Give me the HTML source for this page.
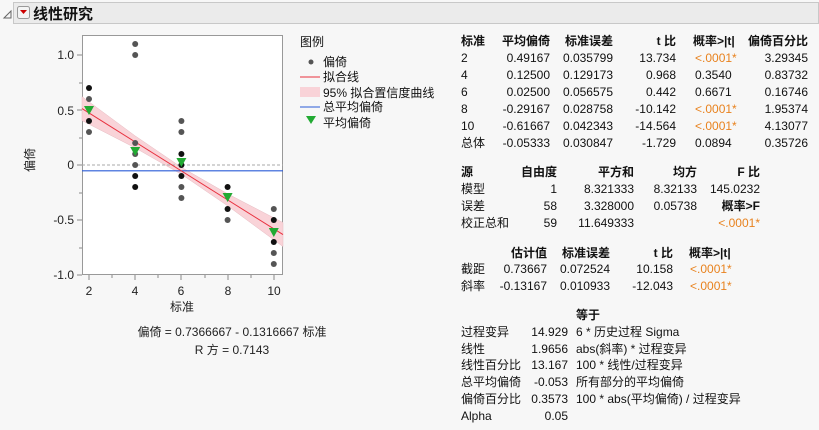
<!DOCTYPE html>
<html><head><meta charset="utf-8"><style>
body{margin:0;background:#f7f7f7;}
svg{display:block;font-family:"Liberation Sans","Noto Sans CJK SC",sans-serif;font-size:12px;}
.b{font-weight:bold}
.o{fill:#e8821e}
</style></head><body>
<svg width="819" height="430" viewBox="0 0 819 430">
<rect width="819" height="430" fill="#f7f7f7"/>
<path d="M4 18 L11 11 L11 18 Z" fill="none" stroke="#666" stroke-width="1"/>
<rect x="13.5" y="2.5" width="805" height="21" fill="#ebebeb" stroke="#c8c8c8"/>
<rect x="17.5" y="6.5" width="12" height="12" rx="2" fill="#f4f4f4" stroke="#999"/>
<path d="M20 10 L27 10 L23.5 14 Z" fill="#c00"/>
<text x="33" y="19" font-size="15" class="b" fill="#111">线性研究</text>
<rect x="82.5" y="35.5" width="200" height="239" fill="#fff" stroke="#999"/>
<polygon points="82,96.6 135.2,135.9 181.4,167.3 227.6,193.8 283,222.6 283,246.6 227.6,205.8 181.4,174.3 135.2,147.9 82,120.6" fill="#f9d3d8" stroke="#e6bcc2" stroke-width="0.5"/>
<line x1="82" y1="165" x2="283" y2="165" stroke="#aaa" stroke-dasharray="3,2"/>
<line x1="82" y1="170.8" x2="283" y2="170.8" stroke="#2a5bd7" stroke-width="1.2"/>
<line x1="82" y1="108.6" x2="283" y2="234.6" stroke="#e8303e" stroke-width="1"/>
<g fill="#555">
<circle cx="89" cy="99" r="3"/><circle cx="89" cy="132" r="3"/>
<circle cx="135.2" cy="44" r="3"/><circle cx="135.2" cy="55" r="3"/><circle cx="135.2" cy="143" r="3"/><circle cx="135.2" cy="154" r="3"/><circle cx="135.2" cy="165" r="3"/>
<circle cx="181.4" cy="121" r="3"/><circle cx="181.4" cy="132" r="3"/><circle cx="181.4" cy="187" r="3"/><circle cx="181.4" cy="198" r="3"/>
<circle cx="227.6" cy="220" r="3"/>
<circle cx="273.8" cy="209" r="3"/><circle cx="273.8" cy="253" r="3"/><circle cx="273.8" cy="264" r="3"/>
</g>
<g fill="#111">
<circle cx="89" cy="88" r="3"/><circle cx="89" cy="121" r="3"/>
<circle cx="135.2" cy="176" r="3"/><circle cx="135.2" cy="187" r="3"/>
<circle cx="181.4" cy="154" r="3"/><circle cx="181.4" cy="165" r="3"/><circle cx="181.4" cy="176" r="3"/>
<circle cx="227.6" cy="187" r="3"/><circle cx="227.6" cy="209" r="3"/>
<circle cx="273.8" cy="220" r="3"/><circle cx="273.8" cy="242" r="3"/>
</g>
<g fill="#22aa33">
<path d="M84 106 L94 106 L89 115 Z"/><path d="M130.2 147 L140.2 147 L135.2 156 Z"/><path d="M176.4 158 L186.4 158 L181.4 167 Z"/><path d="M222.6 193 L232.6 193 L227.6 202 Z"/><path d="M268.8 228 L278.8 228 L273.8 237 Z"/>
</g>
<g stroke="#888"><line x1="77" y1="55" x2="82" y2="55"/><line x1="79" y1="83" x2="82" y2="83"/><line x1="77" y1="110" x2="82" y2="110"/><line x1="79" y1="138" x2="82" y2="138"/><line x1="77" y1="165" x2="82" y2="165"/><line x1="79" y1="193" x2="82" y2="193"/><line x1="77" y1="220" x2="82" y2="220"/><line x1="79" y1="248" x2="82" y2="248"/><line x1="77" y1="275" x2="82" y2="275"/>
<line x1="89" y1="275" x2="89" y2="280"/><line x1="112" y1="275" x2="112" y2="278"/><line x1="135" y1="275" x2="135" y2="280"/><line x1="158" y1="275" x2="158" y2="278"/><line x1="181" y1="275" x2="181" y2="280"/><line x1="205" y1="275" x2="205" y2="278"/><line x1="228" y1="275" x2="228" y2="280"/><line x1="251" y1="275" x2="251" y2="278"/><line x1="274" y1="275" x2="274" y2="280"/></g>
<g text-anchor="end" fill="#222"><text x="74" y="59">1.0</text><text x="74" y="115">0.5</text><text x="74" y="169">0</text><text x="74" y="224">-0.5</text><text x="74" y="279">-1.0</text></g>
<g text-anchor="middle" fill="#222"><text x="89" y="295">2</text><text x="135" y="295">4</text><text x="181" y="295">6</text><text x="228" y="295">8</text><text x="274" y="295">10</text>
<text x="182" y="311">标准</text>
<text x="232" y="336">偏倚 = 0.7366667 - 0.1316667 标准</text>
<text x="232" y="354">R 方 = 0.7143</text></g>
<text transform="translate(34,160) rotate(-90)" text-anchor="middle" fill="#222">偏倚</text>
<g fill="#111">
<text x="300" y="46">图例</text>
<circle cx="311" cy="62" r="2.5" fill="#555"/><text x="323" y="66">偏倚</text>
<line x1="300" y1="77" x2="320" y2="77" stroke="#e8303e"/><text x="323" y="81">拟合线</text>
<rect x="300" y="87" width="20" height="10" fill="#f9d3d8"/><text x="323" y="97">95% 拟合置信度曲线</text>
<line x1="300" y1="107" x2="320" y2="107" stroke="#2a5bd7"/><text x="323" y="111">总平均偏倚</text>
<path d="M306 116 L316 116 L311 124 Z" fill="#22aa33"/><text x="323" y="127">平均偏倚</text>
</g>
<g fill="#111">
<g class="b"><text x="461" y="45">标准</text><text x="550" y="45" text-anchor="end">平均偏倚</text><text x="613" y="45" text-anchor="end">标准误差</text><text x="676" y="45" text-anchor="end">t 比</text><text x="693" y="45">概率&gt;|t|</text><text x="808" y="45" text-anchor="end">偏倚百分比</text></g>
<text x="461" y="62">2</text><text x="461" y="79">4</text><text x="461" y="96">6</text><text x="461" y="113">8</text><text x="461" y="130">10</text><text x="461" y="147">总体</text>
<g text-anchor="end">
<text x="550" y="62">0.49167</text><text x="550" y="79">0.12500</text><text x="550" y="96">0.02500</text><text x="550" y="113">-0.29167</text><text x="550" y="130">-0.61667</text><text x="550" y="147">-0.05333</text>
<text x="613" y="62">0.035799</text><text x="613" y="79">0.129173</text><text x="613" y="96">0.056575</text><text x="613" y="113">0.028758</text><text x="613" y="130">0.042343</text><text x="613" y="147">0.030847</text>
<text x="676" y="62">13.734</text><text x="676" y="79">0.968</text><text x="676" y="96">0.442</text><text x="676" y="113">-10.142</text><text x="676" y="130">-14.564</text><text x="676" y="147">-1.729</text>
<text x="808" y="62">3.29345</text><text x="808" y="79">0.83732</text><text x="808" y="96">0.16746</text><text x="808" y="113">1.95374</text><text x="808" y="130">4.13077</text><text x="808" y="147">0.35726</text>
</g>
<text x="695" y="62" class="o">&lt;.0001*</text><text x="695" y="79">0.3540</text><text x="695" y="96">0.6671</text><text x="695" y="113" class="o">&lt;.0001*</text><text x="695" y="130" class="o">&lt;.0001*</text><text x="695" y="147">0.0894</text>
</g>
<g fill="#111">
<g class="b"><text x="461" y="176">源</text><g text-anchor="end"><text x="557" y="176">自由度</text><text x="634" y="176">平方和</text><text x="697" y="176">均方</text><text x="760" y="176">F 比</text></g></g>
<text x="461" y="193">模型</text><text x="461" y="210">误差</text><text x="461" y="227">校正总和</text>
<g text-anchor="end">
<text x="557" y="193">1</text><text x="557" y="210">58</text><text x="557" y="227">59</text>
<text x="634" y="193">8.321333</text><text x="634" y="210">3.328000</text><text x="634" y="227">11.649333</text>
<text x="697" y="193">8.32133</text><text x="697" y="210">0.05738</text>
<text x="760" y="193">145.0232</text><text x="760" y="210" class="b">概率&gt;F</text><text x="760" y="227" class="o">&lt;.0001*</text>
</g></g>
<g fill="#111">
<g class="b" text-anchor="end"><text x="547" y="257">估计值</text><text x="610" y="257">标准误差</text><text x="673" y="257">t 比</text></g><text x="689" y="257" class="b">概率&gt;|t|</text>
<text x="461" y="273">截距</text><text x="461" y="290">斜率</text>
<g text-anchor="end"><text x="547" y="273">0.73667</text><text x="547" y="290">-0.13167</text><text x="610" y="273">0.072524</text><text x="610" y="290">0.010933</text><text x="673" y="273">10.158</text><text x="673" y="290">-12.043</text></g>
<text x="690" y="273" class="o">&lt;.0001*</text><text x="690" y="290" class="o">&lt;.0001*</text>
</g>
<g fill="#111">
<text x="576" y="319" class="b">等于</text>
<text x="461" y="336">过程变异</text><text x="461" y="353">线性</text><text x="461" y="369">线性百分比</text><text x="461" y="386">总平均偏倚</text><text x="461" y="403">偏倚百分比</text><text x="461" y="420">Alpha</text>
<g text-anchor="end"><text x="568" y="336">14.929</text><text x="568" y="353">1.9656</text><text x="568" y="369">13.167</text><text x="568" y="386">-0.053</text><text x="568" y="403">0.3573</text><text x="568" y="420">0.05</text></g>
<text x="576" y="336">6 * 历史过程 Sigma</text><text x="576" y="353">abs(斜率) * 过程变异</text><text x="576" y="369">100 * 线性/过程变异</text><text x="576" y="386">所有部分的平均偏倚</text><text x="576" y="403">100 * abs(平均偏倚) / 过程变异</text>
</g>
</svg>
</body></html>
